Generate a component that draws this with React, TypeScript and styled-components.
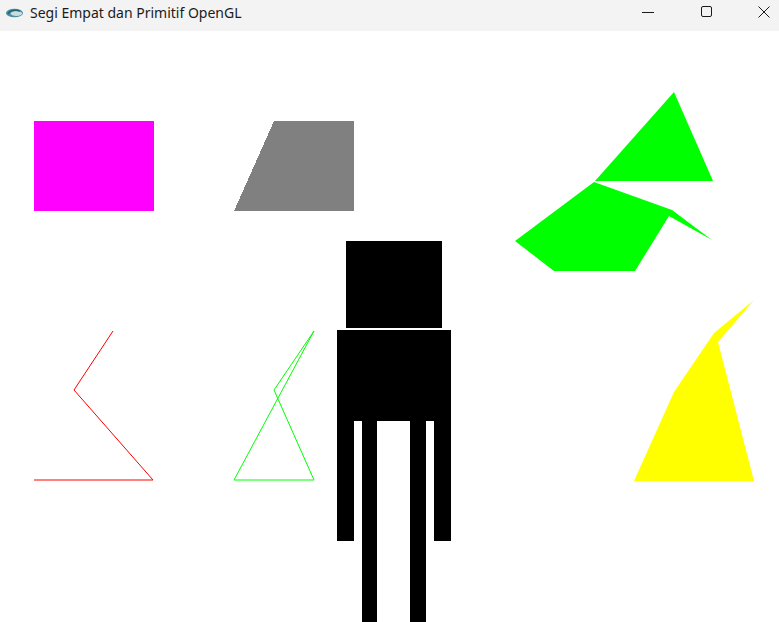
import styled, { createGlobalStyle } from 'styled-components';

const GlobalStyle = createGlobalStyle`
  html, body {
    margin: 0;
    padding: 0;
    background: #ffffff;
  }
`;

// titik-titik diambil langsung dari koordinat layar (y sudah termasuk title bar)
const redStrip = '113,331 74,390 153,480 34,480';
const greenLoop = '314,331 274,390 314,480 234,480';
const greenTriangle = '674,92 713,181 595,181';
const greenPolygon = '594,182 672,210 712,240 669,216 635,271 554,271 515,241';
const yellowPolygon = '754,300 714,333 674,392 634,481 754,481 718,342';

const App = () => {
  return (
    <>
      <GlobalStyle />
      <Window>
        <TitleBar>
          <AppIcon viewBox='0 0 20 12'>
            <ellipse cx='10' cy='6' rx='9' ry='4.5' fill='#4f8f9e' />
            <ellipse cx='12' cy='6.5' rx='6' ry='2.6' fill='#c9dde3' />
            <path d='M3 7 Q7 1 16 4' stroke='#1f6677' strokeWidth='1.6' fill='none' />
          </AppIcon>
          <Title>Segi Empat dan Primitif OpenGL</Title>
          <CaptionButtons>
            <CaptionButton>
              <svg width='12' height='10' viewBox='0 0 12 10'>
                <path d='M0 5.5 H12' stroke='#1a1a1a' strokeWidth='1' />
              </svg>
            </CaptionButton>
            <CaptionButton>
              <svg width='11' height='11' viewBox='0 0 11 11'>
                <rect x='0.5' y='0.5' width='10' height='10' rx='1.5' stroke='#1a1a1a' strokeWidth='1' fill='none' />
              </svg>
            </CaptionButton>
            <CaptionButton>
              <svg width='12' height='12' viewBox='0 0 12 12'>
                <path d='M0.5 0.5 L11.5 11.5 M11.5 0.5 L0.5 11.5' stroke='#1a1a1a' strokeWidth='1' />
              </svg>
            </CaptionButton>
          </CaptionButtons>
        </TitleBar>
        <Canvas>
          <Scene viewBox='0 31 779 591' shapeRendering='crispEdges'>
            <rect x='34' y='121' width='120' height='90' fill='#ff00ff' />
            <polygon points='234,211 274,121 354,121 354,211' fill='#808080' />

            <polygon points={greenTriangle} fill='#00ff00' shapeRendering='auto' />
            <polygon points={greenPolygon} fill='#00ff00' shapeRendering='auto' />

            <polyline points={redStrip} fill='none' stroke='#ff0000' strokeWidth='1' shapeRendering='auto' />
            <polygon points={greenLoop} fill='none' stroke='#00ff00' strokeWidth='1' shapeRendering='auto' />

            <polygon points={yellowPolygon} fill='#ffff00' shapeRendering='auto' />

            {/* orang hitam */}
            <rect x='346' y='241' width='96' height='87' fill='#000000' />
            <rect x='337' y='330' width='114' height='91' fill='#000000' />
            <rect x='337' y='420' width='17' height='121' fill='#000000' />
            <rect x='434' y='420' width='17' height='121' fill='#000000' />
            <rect x='362' y='420' width='15' height='210' fill='#000000' />
            <rect x='410' y='420' width='16' height='210' fill='#000000' />
          </Scene>
        </Canvas>
      </Window>
    </>
  );
};

export default App;

const Window = styled.div`
  width: 779px;
  height: 622px;
  display: flex;
  flex-direction: column;
  overflow: hidden;
  background-color: #ffffff;
`;

const TitleBar = styled.div`
  height: 31px;
  flex-shrink: 0;
  display: flex;
  align-items: center;
  background-color: #f3f3f3;
  padding-left: 5px;
`;

const AppIcon = styled.svg`
  width: 19px;
  height: 12px;
  margin-right: 6px;
  margin-top: -5px;
`;

const Title = styled.span`
  flex: 1;
  font-family: 'Noto Sans', 'Open Sans', sans-serif;
  font-size: 14px;
  color: #1b1b1b;
  margin-top: -7px;
  white-space: nowrap;
`;

const CaptionButtons = styled.div`
  display: flex;
  align-self: stretch;
  margin-right: -14px;
`;

const CaptionButton = styled.div`
  width: 58px;
  display: flex;
  align-items: center;
  justify-content: center;
  margin-top: -8px;
`;

const Canvas = styled.div`
  flex: 1;
  background-color: #ffffff;
`;

const Scene = styled.svg`
  display: block;
  width: 779px;
  height: 591px;
`;
